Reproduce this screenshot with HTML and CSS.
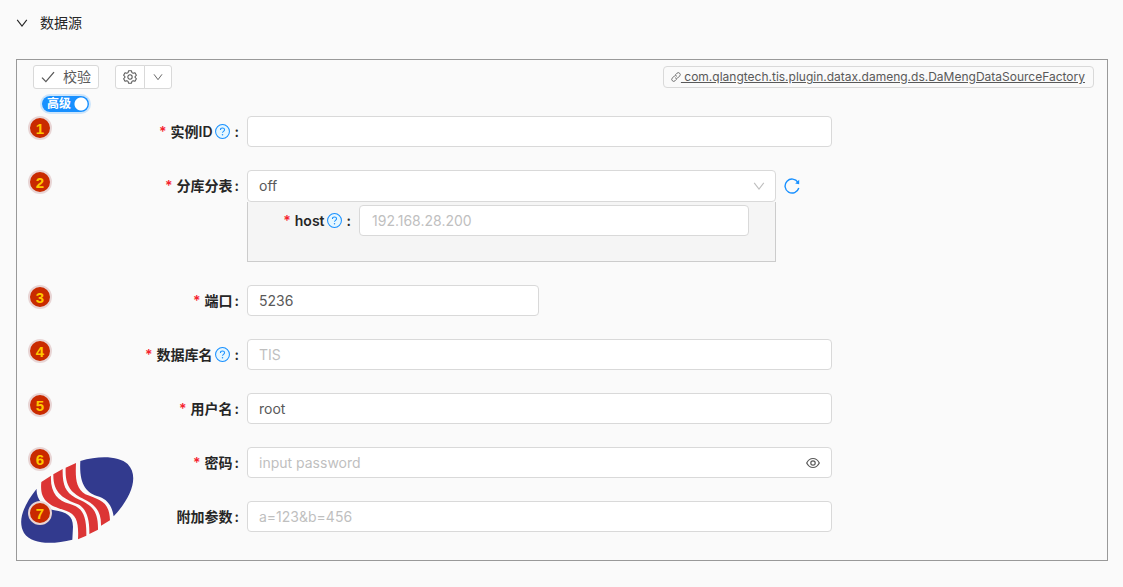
FILE: index.html
```html
<!DOCTYPE html>
<html lang="zh">
<head>
    <meta charset="UTF-8">
    <meta name="viewport" content="width=device-width, initial-scale=1.0">
    <title>数据源</title>
    <link rel="stylesheet" href="styles.css">
</head>
<body>
    <svg width="0" height="0" class="sprite">
        <symbol id="help" viewBox="0 0 16 16">
            <circle cx="8" cy="8" r="7.4" fill="#e6f7ff" stroke="#1890ff" stroke-width="1.1"/>
            <path d="M5.8 6.3c0-1.2.9-2 2.2-2s2.2.8 2.2 1.9c0 1.6-2.2 1.6-2.2 3.2" fill="none" stroke="#1890ff" stroke-width="1.1"/>
            <circle cx="8" cy="11.5" r=".8" fill="#1890ff"/>
        </symbol>
        <symbol id="down" viewBox="0 0 12 12">
            <path d="M1.2 2.8 6 9.2l4.8-6.4" fill="none" stroke="currentColor" stroke-width="1.1"/>
        </symbol>
    </svg>

    <header class="header">
        <button class="collapse" type="button">
            <svg class="arrow"><use href="#down"/></svg>
            <span>数据源</span>
        </button>
    </header>

    <form class="panel">
        <div class="toolbar">
            <button class="btn verify" type="button">
                <svg class="check" viewBox="0 0 14 14"><path d="M1 7.6 4.9 11.6 13 2.2" fill="none" stroke="currentColor" stroke-width="1.3"/></svg>
                <span>校验</span>
            </button>
            <div class="btn-group">
                <button class="btn" type="button" aria-label="设置">
                    <svg class="gear" viewBox="0 0 16 16" fill="none" stroke="currentColor" stroke-width="1.2" stroke-linejoin="round">
                        <path d="M6.3.9h3.4l.5 2.1 1.4.8 2.1-.6 1.6 2.8-1.5 1.5v1l1.5 1.5-1.6 2.8-2.1-.6-1.4.8-.5 2.1H6.3L5.800 13l-1.400-.8-2.100.6L.700 10l1.500-1.500v-1L.700 6l1.600-2.800 2.100.6L5.800 3z"/>
                        <circle cx="8" cy="8" r="2.500"/>
                    </svg>
                </button>
                <button class="btn" type="button" aria-label="更多">
                    <svg class="arrow"><use href="#down"/></svg>
                </button>
            </div>
            <a class="tag" href="#">
                <svg class="link" viewBox="0 0 12 12" fill="none" stroke="currentColor" stroke-width="1" stroke-linecap="round">
                    <path d="M5.500 3.100 7.100 1.500a2.200 2.200 0 0 1 3.300 3.300L8 7.200a2.100 2.100 0 0 1-2.800 0M6.500 8.900l-1.600 1.600a2.200 2.200 0 0 1-3.300-3.300L4 4.800a2.100 2.100 0 0 1 2.800 0"/>
                </svg><span class="tag-text">&nbsp;com.qlangtech.tis.plugin.datax.dameng.ds.DaMengDataSourceFactory</span>
            </a>
        </div>

        <label class="switch">
            <input type="checkbox" checked>
            <span>高级</span>
        </label>

        <svg class="logo" viewBox="30 45 345 264">
            <path d="M211 60C270 42 328 46 353 69C389 106 363 171 311 226C306 195 294 177 268 167C226 156 207 126 211 60z" fill="#323a8e"/>
            <path d="M80 143C77 172 101 202 133 208C169 213 189 224 189 257L187 296C130 310 66 312 42 276C21 239 41 192 80 143z" fill="#323a8e"/>
            <path d="M94 123 123 104C120 154 143 180 178 188C217 199 230 222 229 284L204 295C206 250 203 220 168 209C115 193 88 178 94 123z" fill="#dc3535"/>
            <path d="M130 100 158 84C157 130 165 152 196 170C240 190 265 202 264 266L238 279C239 235 230 203 204 190C161 173 129 157 130 100z" fill="#dc3535"/>
            <path d="M167 80 198 66C196 111 197 140 226 160C270 178 298 180 300 238L273 254C274 218 261 195 231 179C190 158 164 144 167 80z" fill="#dc3535"/>
        </svg>

        <div class="row">
            <span class="step">1</span>
            <label class="label required" for="name">实例ID<svg class="help"><use href="#help"/></svg></label>
            <div class="control"><input class="input" id="name" type="text"></div>
        </div>
        <div class="row">
            <span class="step">2</span>
            <label class="label required" for="split">分库分表</label>
            <div class="control">
                <div class="with-refresh">
                    <div class="select">
                        <select class="input" id="split"><option>off</option><option>on</option></select>
                        <svg class="arrow"><use href="#down"/></svg>
                    </div>
                    <button class="refresh" type="button" aria-label="刷新">
                        <svg viewBox="0 0 16 16"><path d="M14 4.3A7 7 0 1 0 14.8 10" fill="none" stroke="currentColor" stroke-width="1.4"/><path d="M15.2 1.8v4.4l-4-.8z" fill="currentColor"/></svg>
                    </button>
                </div>
                <div class="sub">
                    <label class="label required" for="host">host<svg class="help"><use href="#help"/></svg></label>
                    <input class="input" id="host" type="text" placeholder="192.168.28.200">
                </div>
            </div>
        </div>
        <div class="row">
            <span class="step">3</span>
            <label class="label required" for="port">端口</label>
            <div class="control"><input class="input short" id="port" type="text" value="5236"></div>
        </div>
        <div class="row">
            <span class="step">4</span>
            <label class="label required" for="db">数据库名<svg class="help"><use href="#help"/></svg></label>
            <div class="control"><input class="input" id="db" type="text" placeholder="TIS"></div>
        </div>
        <div class="row">
            <span class="step">5</span>
            <label class="label required" for="user">用户名</label>
            <div class="control"><input class="input" id="user" type="text" value="root"></div>
        </div>
        <div class="row">
            <span class="step">6</span>
            <label class="label required" for="password">密码</label>
            <div class="control password">
                <input class="input" id="password" type="password" placeholder="input password">
                <button class="eye" type="button" aria-label="显示密码">
                    <svg viewBox="0 0 14 14" fill="none" stroke="currentColor" stroke-width="1.2"><path d="M.7 7C2.2 4 4.3 2.5 7 2.5S11.8 4 13.3 7C11.8 10 9.7 11.5 7 11.5S2.2 10 .7 7z"/><circle cx="7" cy="7" r="2.2"/></svg>
                </button>
            </div>
        </div>
        <div class="row">
            <span class="step">7</span>
            <label class="label" for="extra">附加参数</label>
            <div class="control"><input class="input" id="extra" type="text" placeholder="a=123&amp;b=456"></div>
        </div>
    </form>
</body>
</html>
```

FILE: styles.css
```css
* {
    box-sizing: border-box;
}

body {
    margin: 0;
    padding: 12px 15px 26px 16px;
    background-color: #fafafa;
    color: #595959;
    font-family: Inter, "Noto Sans CJK SC", sans-serif;
    font-size: 14px;
    line-height: 22px;
}

button, input, select {
    font: inherit;
    color: inherit;
}

button {
    padding: 0;
    border: none;
    background: none;
    cursor: pointer;
}

svg {
    display: block;
    flex: none;
}

.sprite {
    position: absolute;
}

.header {
    margin-bottom: 25px;
}

.collapse {
    display: flex;
    align-items: center;
    gap: 12px;
    color: #262626;
}

.arrow {
    width: 12px;
    height: 12px;
}

.panel {
    position: relative;
    border: 1px solid #999;
    padding: 5px 0;
}

.toolbar {
    display: flex;
    align-items: center;
    padding: 0 13px 0 16px;
}

.btn {
    display: flex;
    align-items: center;
    justify-content: center;
    width: 28px;
    height: 24px;
    border: 1px solid #d9d9d9;
    border-radius: 3px;
    background-color: #fff;
}

.verify {
    width: 66px;
    gap: 8px;
}

.check {
    width: 14px;
    height: 14px;
}

.btn-group {
    display: flex;
    margin-left: 16px;
}

.btn-group .btn:first-child {
    width: 30px;
    border-radius: 3px 0 0 3px;
}

.btn-group .btn:last-child {
    margin-left: -1px;
    border-radius: 0 3px 3px 0;
}

.btn-group .arrow {
    width: 10px;
    height: 10px;
}

.gear {
    width: 14px;
    height: 14px;
}

.tag {
    display: flex;
    align-items: center;
    height: 22px;
    margin-left: auto;
    padding: 0 8px 0 7px;
    border: 1px solid #d9d9d9;
    border-radius: 4px;
    color: #595959;
    font-size: 12px;
    line-height: 20px;
    text-decoration: none;
}

.tag-text {
    text-decoration: underline;
}

.link {
    width: 10px;
    height: 10px;
}

.switch {
    position: relative;
    display: block;
    width: 47px;
    height: 16px;
    margin: 7px 0 4px 25px;
    color: #fff;
    font-size: 12px;
    font-weight: 700;
    line-height: 16px;
}

.switch input {
    display: block;
    appearance: none;
    width: 100%;
    height: 16px;
    margin: 0;
    border-radius: 8px;
    background: radial-gradient(circle at 39px 8px, #fff 6px, #1890ff 7px);
    box-shadow: 0 0 0 2px rgba(24, 144, 255, 0.2);
}

.switch span {
    position: absolute;
    left: 5px;
    top: 0;
}

.logo {
    position: absolute;
    left: 3px;
    bottom: 16px;
    width: 115px;
    height: 88px;
}

.row {
    position: relative;
    display: flex;
    align-items: flex-start;
    margin-bottom: 23px;
}

.step {
    flex: none;
    width: 24px;
    height: 24px;
    margin-left: 11px;
    border: 2px solid #e8d5d5;
    border-radius: 50%;
    background-color: #c92a00;
    color: #ffc800;
    font-family: "Liberation Sans", Arial, sans-serif;
    font-size: 15px;
    font-weight: bold;
    line-height: 22px;
    text-align: center;
}

.label {
    display: flex;
    flex: none;
    align-items: center;
    justify-content: flex-end;
    width: 187px;
    height: 31px;
    margin-right: 8px;
    color: #262626;
    font-weight: 600;
}

.label::after {
    content: ":";
    margin-left: 2px;
}

.required::before {
    content: "*";
    margin-right: 4px;
    color: #f5222d;
}

.help {
    width: 15px;
    height: 15px;
    margin: 0 3px 0 2px;
}

.control {
    flex: 1;
}

.input {
    display: block;
    width: 68%;
    height: 31px;
    padding: 0 11px;
    border: 1px solid #d9d9d9;
    border-radius: 4px;
    background-color: #fff;
    outline: none;
}

.input::placeholder {
    color: #bfbfbf;
}

.short {
    width: 34%;
}

.with-refresh {
    display: flex;
    align-items: center;
    gap: 8px;
}

.select {
    position: relative;
    width: 61.5%;
}

.select .input {
    width: 100%;
    height: 32px;
    appearance: none;
}

.select .arrow {
    position: absolute;
    right: 11px;
    top: 10px;
    color: #bfbfbf;
    pointer-events: none;
}

.refresh {
    color: #1890ff;
}

.refresh svg {
    width: 16px;
    height: 16px;
}

.sub {
    display: flex;
    width: 61.5%;
    height: 60px;
    padding: 3px 0 0;
    border: 1px solid #ccc;
    border-top: none;
    background-color: #f5f5f5;
}

.sub .label {
    width: 103px;
}

.sub .input {
    width: 74%;
    padding: 0 12px;
}

.password {
    display: flex;
    align-items: center;
}

.eye {
    margin-left: -26px;
}

.eye svg {
    width: 14px;
    height: 14px;
}
```
